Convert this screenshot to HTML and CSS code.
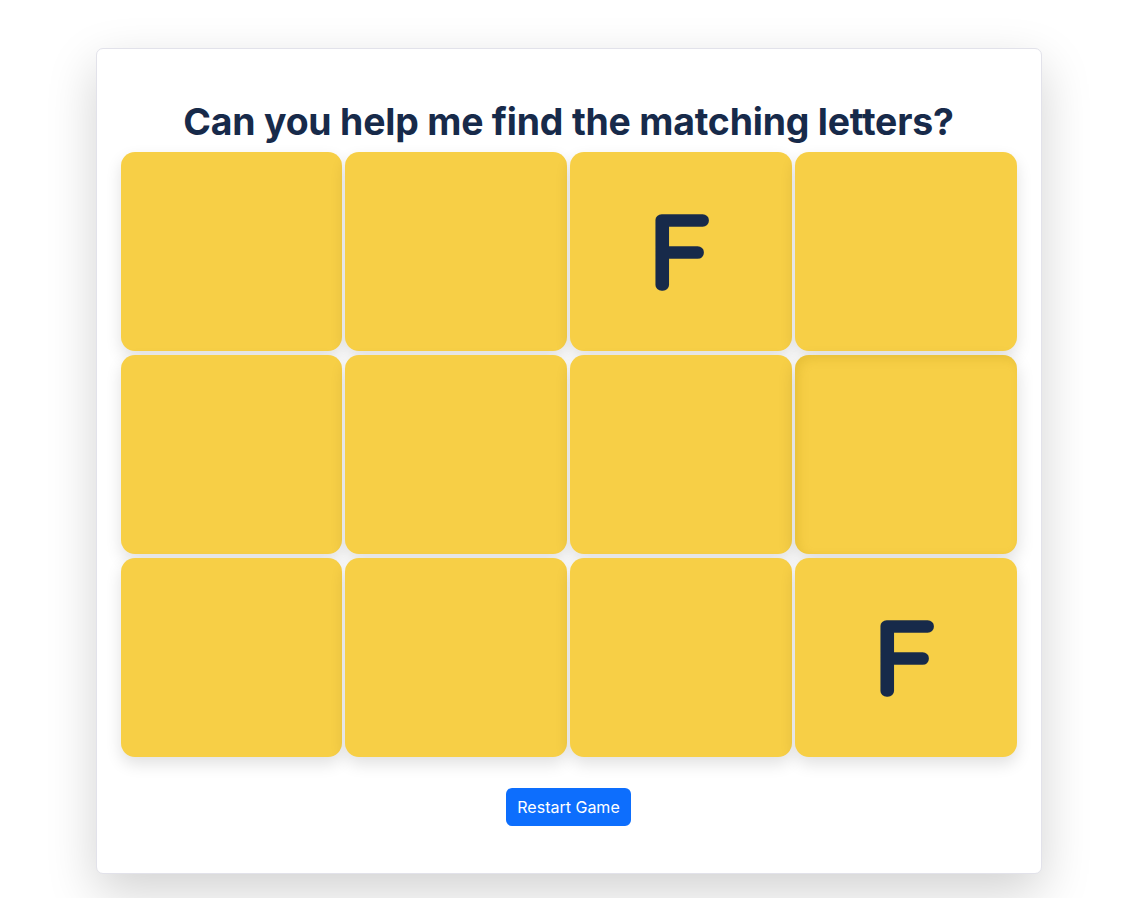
FILE: index.html
```html
<!DOCTYPE html>
<html lang="en">
<head>
<meta charset="utf-8">
<title>Memory Game</title>
<link rel="stylesheet" href="styles.css">
</head>
<body>
<main class="game">
  <h1 class="title">Can you help me find the matching letters?</h1>
  <div class="board">
    <div class="tile"></div>
    <div class="tile"></div>
    <div class="tile"><svg class="letter" viewBox="0 0 222 199" width="222" height="199"><text x="-2.5" y="133" transform="translate(111 0) scale(1.08 1)">F</text></svg></div>
    <div class="tile"></div>
    <div class="tile"></div>
    <div class="tile"></div>
    <div class="tile"></div>
    <div class="tile tile-lift"></div>
    <div class="tile"></div>
    <div class="tile"></div>
    <div class="tile"></div>
    <div class="tile"><svg class="letter" viewBox="0 0 222 199" width="222" height="199"><text x="-2.5" y="133" transform="translate(111 0) scale(1.08 1)">F</text></svg></div>
  </div>
  <div class="actions">
    <button class="btn">Restart Game</button>
  </div>
</main>
</body>
</html>
```
FILE: styles.css
```css
* { box-sizing: border-box; }
html, body { margin: 0; padding: 0; background: #ffffff; }
body {
  font-family: Inter, "Liberation Sans", sans-serif;
  padding: 48px 0 60px;
  min-height: 100vh;
}
.game {
  width: 946px;
  margin: 0 auto;
  background: #fff;
  border: 1px solid #e2e2ea;
  border-radius: 7px;
  box-shadow: 0 18px 50px rgba(0, 0, 0, 0.18);
  padding: 50px 24px 47px;
}
.title {
  margin: 0 0 7px;
  text-align: center;
  font-size: 37.4px;
  line-height: 46px;
  font-weight: 700;
  color: #172a4a;
  letter-spacing: -0.2px;
}
.board {
  display: grid;
  grid-template-columns: repeat(4, 1fr);
  grid-auto-rows: 199px;
  column-gap: 3px;
  row-gap: 4px;
}
.tile {
  background: #f7cf46;
  border-radius: 14px;
  box-shadow: 0 7px 16px rgba(0, 0, 0, 0.12);
  overflow: hidden;
  display: flex;
  align-items: center;
  justify-content: center;
}
.tile-lift {
  box-shadow: inset 4px 4px 10px rgba(190, 150, 20, 0.25), 0 7px 18px rgba(0, 0, 0, 0.14);
}
.letter { display: block; width: 100%; height: 100%; }
.letter text {
  font-family: Lato, "DejaVu Sans", sans-serif;
  font-weight: 100;
  font-size: 93px;
  text-anchor: middle;
  fill: #172a4a;
  stroke: #172a4a;
  stroke-width: 11.5px;
  stroke-linejoin: round;
  stroke-linecap: round;
}
.actions {
  display: flex;
  justify-content: center;
  margin-top: 31px;
}
.btn {
  font-family: Inter, "Liberation Sans", sans-serif;
  font-size: 16px;
  line-height: 24px;
  padding: 7px 11.5px;
  color: #fff;
  background: #0d6efd;
  border: 0;
  border-radius: 6px;
  cursor: pointer;
}
```
